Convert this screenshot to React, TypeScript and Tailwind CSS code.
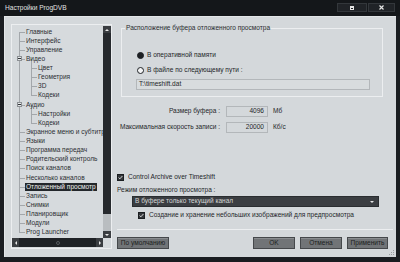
import React from "react";

type Node = { t: string; l: 0 | 1; open?: boolean; last?: boolean; sel?: boolean };

const tree: Node[] = [
  { t: "Главные", l: 0 },
  { t: "Интерфейс", l: 0 },
  { t: "Управление", l: 0 },
  { t: "Видео", l: 0, open: true },
  { t: "Цвет", l: 1 },
  { t: "Геометрия", l: 1 },
  { t: "3D", l: 1 },
  { t: "Кодеки", l: 1, last: true },
  { t: "Аудио", l: 0, open: true },
  { t: "Настройки", l: 1 },
  { t: "Кодеки", l: 1, last: true },
  { t: "Экранное меню и субтитр", l: 0 },
  { t: "Языки", l: 0 },
  { t: "Программа передач", l: 0 },
  { t: "Родительский контроль", l: 0 },
  { t: "Поиск каналов", l: 0 },
  { t: "Несколько каналов", l: 0 },
  { t: "Отложенный просмотр", l: 0, sel: true },
  { t: "Запись", l: 0 },
  { t: "Снимки", l: 0 },
  { t: "Планировщик", l: 0 },
  { t: "Модули", l: 0 },
  { t: "Prog Launcher", l: 0, last: true },
];

function TreeRow({ node, first }: { node: Node; first: boolean }) {
  const topLast = node.l === 0 && node.last;
  return (
    <div className="relative flex h-[9.14px] shrink-0 items-center">
      {/* guides */}
      <span
        className={
          "absolute left-[7px] w-px bg-[#a3a7ab] " +
          (topLast ? "top-0 h-1/2" : first ? "top-1/2 bottom-0" : "top-0 bottom-0")
        }
      />
      {node.l === 0 && <span className="absolute left-[7px] top-1/2 h-px w-[6px] bg-[#a3a7ab]" />}
      {node.l === 1 && (
        <>
          <span className={"absolute left-[19px] w-px bg-[#a3a7ab] top-0 " + (node.last ? "h-1/2" : "bottom-0")} />
          <span className="absolute left-[19px] top-1/2 h-px w-[6px] bg-[#a3a7ab]" />
        </>
      )}
      {node.open && (
        <>
          <span className="absolute left-[19px] top-1/2 bottom-0 w-px bg-[#a3a7ab]" />
          <span className="absolute left-[5px] top-[2px] flex h-[5px] w-[5px] items-center justify-center border border-[#8c9094] bg-[#e4e7e9]">
            <span className="h-px w-[3px] bg-[#303336]" />
          </span>
        </>
      )}
      <span
        className={
          "relative whitespace-nowrap px-[1px] leading-[8px] " +
          (node.l === 0 ? "ml-[13px] " : "ml-[25px] ") +
          (node.sel ? "bg-[#23272b] text-[#f0f0f0]" : "text-[#2c2f33]")
        }
      >
        {node.t}
      </span>
    </div>
  );
}

function Radio({ on }: { on: boolean }) {
  return (
    <span
      className={
        "block h-[7px] w-[7px] rounded-full border-[1.5px] border-[#1d2024] " +
        (on ? "bg-[#1d2024]" : "bg-[#f4f5f6]")
      }
    />
  );
}

function Check() {
  return (
    <span className="flex h-[7px] w-[7px] items-center justify-center border border-[#1b1e21] bg-[#33363a]">
      <svg width="5" height="5" viewBox="0 0 5 5">
        <path d="M0.6 2.6 L1.9 3.8 L4.4 1" stroke="#e8e8e8" strokeWidth="0.9" fill="none" />
      </svg>
    </span>
  );
}

function Btn({ label, w }: { label: string; w: string }) {
  return (
    <div
      className={
        "flex h-[12px] items-center justify-center border border-[#45484b] bg-[#717477] text-[#1c1e20] shadow-[inset_0_1px_0_#8a8d90] " +
        w
      }
    >
      {label}
    </div>
  );
}

export default function App() {
  return (
    <div className="flex h-[262px] w-[400px] flex-col overflow-hidden bg-[#1a1d21] font-['Liberation_Sans',Arial,sans-serif] text-[6.55px] leading-none">
      {/* title bar */}
      <div className="flex h-[16px] shrink-0 items-start justify-between bg-[#14171a]">
        <span className="ml-[5px] mt-[5px] text-[6.6px] text-[#e2e2e2]">Настройки ProgDVB</span>
        <div className="mr-[5px] mt-[3px] flex gap-px">
          <div className="flex h-[9px] w-[30px] items-center justify-center border border-[#33373b] bg-[#202327]">
            <span className="h-[4px] w-[4px] border border-t-2 border-[#e6e6e6]" />
          </div>
          <div className="flex h-[9px] w-[27px] items-center justify-center border border-[#33373b] bg-[#202327]">
            <svg width="5" height="5" viewBox="0 0 5 5">
              <path d="M0.5 0.5 L4.5 4.5 M4.5 0.5 L0.5 4.5" stroke="#e6e6e6" strokeWidth="1.2" />
            </svg>
          </div>
        </div>
      </div>

      {/* client */}
      <div className="relative ml-[4px] flex h-[241px] w-[392px] shrink-0 border-l border-t border-[#e3e6e8] bg-[#d4d8db]">
        {/* tree panel */}
        <div className="ml-[6px] mt-[7px] flex h-[225px] w-[101px] shrink-0 flex-col border border-[#eceef0] bg-[#d6dadd]">
          <div className="flex h-[213px] shrink-0">
            <div className="flex min-w-0 flex-1 flex-col overflow-hidden pt-[2px]">
              {tree.map((n, i) => (
                <TreeRow key={i} node={n} first={i === 0} />
              ))}
            </div>
            <div className="mt-[1px] flex h-[212px] w-[8px] shrink-0 flex-col">
              <div className="flex h-[7px] items-center justify-center bg-[#3a3d41]">
                <span className="h-0 w-0 border-x-[2px] border-b-[2px] border-x-transparent border-b-[#e8e8e8]" />
              </div>
              <div className="h-[181px] bg-[#26292d]" />
              <div className="h-[17px] bg-[#b9bdc0]" />
              <div className="flex h-[7px] items-center justify-center bg-[#3a3d41]">
                <span className="h-0 w-0 border-x-[2px] border-t-[2px] border-x-transparent border-t-[#e8e8e8]" />
              </div>
            </div>
          </div>
          <div className="flex h-[9px] shrink-0">
            <div className="flex flex-1 items-center bg-[#2a2d31]">
              <div className="flex h-full w-[7px] items-center justify-center bg-[#3a3d41]">
                <span className="h-0 w-0 border-y-[2px] border-r-[2px] border-y-transparent border-r-[#e8e8e8]" />
              </div>
              <div className="flex h-full flex-1 items-center justify-center bg-[#1f2226]">
                <span className="h-[4px] w-[4px] rounded-full border border-[#55595d]" />
              </div>
              <div className="flex h-full w-[7px] items-center justify-center bg-[#3a3d41]">
                <span className="h-0 w-0 border-y-[2px] border-l-[2px] border-y-transparent border-l-[#e8e8e8]" />
              </div>
            </div>
            <div className="w-[8px] bg-[#d6dadd]" />
          </div>
        </div>

        {/* right panel */}
        <div className="ml-[5px] flex w-[276px] flex-col text-[#24272a]">
          {/* group box */}
          <div className="relative ml-[4px] mt-[11px] flex h-[69px] w-[262px] shrink-0 flex-col border border-[#eceef0]">
            <span className="absolute -top-[4px] left-[3px] bg-[#d4d8db] px-[1px] text-[#2a2d30]">
              Расположение буфера отложенного просмотра
            </span>
            <div className="ml-[15px] mt-[22px] flex h-[8px] items-center gap-[3px]">
              <Radio on />
              <span>В оперативной памяти</span>
            </div>
            <div className="ml-[15px] mt-[7px] flex h-[8px] items-center gap-[3px]">
              <Radio on={false} />
              <span>В файле по следующему пути :</span>
            </div>
            <div className="ml-[14px] mt-[5px] flex h-[11px] w-[234px] items-center border border-[#b3b7ba] bg-[#d8dcde] pl-[2px]">
              T:\timeshift.dat
            </div>
          </div>

          {/* sizes */}
          <div className="mt-[9px] flex h-[11px] shrink-0 items-center">
            <span className="w-[103px] text-right">Размер буфера :</span>
            <span className="ml-[6px] flex h-full w-[42px] items-center justify-end border border-[#b3b7ba] pr-[3px]">
              4096
            </span>
            <span className="ml-[5px]">Мб</span>
          </div>
          <div className="mt-[5px] flex h-[11px] shrink-0 items-center">
            <span className="w-[103px] whitespace-nowrap text-right">Максимальная скорость записи :</span>
            <span className="ml-[6px] flex h-full w-[42px] items-center justify-end border border-[#b3b7ba] pr-[3px]">
              20000
            </span>
            <span className="ml-[5px]">Кб/с</span>
          </div>

          <div className="mt-[40px] flex h-[8px] shrink-0 items-center gap-[4px]">
            <Check />
            <span>Control Archive over Timeshift</span>
          </div>
          <div className="mt-[5px] flex h-[8px] shrink-0 items-center">Режим отложенного просмотра :</div>
          <div className="ml-[15px] mt-[2px] flex h-[11px] w-[247px] shrink-0 items-center justify-between border border-[#2a2d30] bg-[#3b3e42] pl-[2px] pr-[4px] text-[#d6d6d6]">
            <span>В буфере только текущий канал</span>
            <span className="h-0 w-0 border-x-[2px] border-t-[2px] border-x-transparent border-t-[#e8e8e8]" />
          </div>
          <div className="ml-[21px] mt-[4px] flex h-[8px] shrink-0 items-center gap-[4px]">
            <Check />
            <span>Создание и хранение небольших изображений для предпросмотра</span>
          </div>

          <div className="mt-[10px] h-px w-[276px] shrink-0 bg-[#eceef0]" />

          <div className="mt-[7px] flex shrink-0 items-center">
            <Btn label="По умолчанию" w="w-[52px]" />
            <div className="ml-auto mr-[5px] flex gap-[5px]">
              <Btn label="OK" w="w-[42px]" />
              <Btn label="Отмена" w="w-[42px]" />
              <Btn label="Применить" w="w-[41px]" />
            </div>
          </div>
        </div>

        {/* resize grip */}
        <svg className="absolute bottom-[1px] right-[1px]" width="6" height="6" viewBox="0 0 6 6">
          <rect x="4" y="0" width="1" height="1" fill="#9a9ea1" />
          <rect x="2" y="2" width="1" height="1" fill="#9a9ea1" />
          <rect x="4" y="2" width="1" height="1" fill="#9a9ea1" />
          <rect x="0" y="4" width="1" height="1" fill="#9a9ea1" />
          <rect x="2" y="4" width="1" height="1" fill="#9a9ea1" />
          <rect x="4" y="4" width="1" height="1" fill="#9a9ea1" />
        </svg>
      </div>
    </div>
  );
}
